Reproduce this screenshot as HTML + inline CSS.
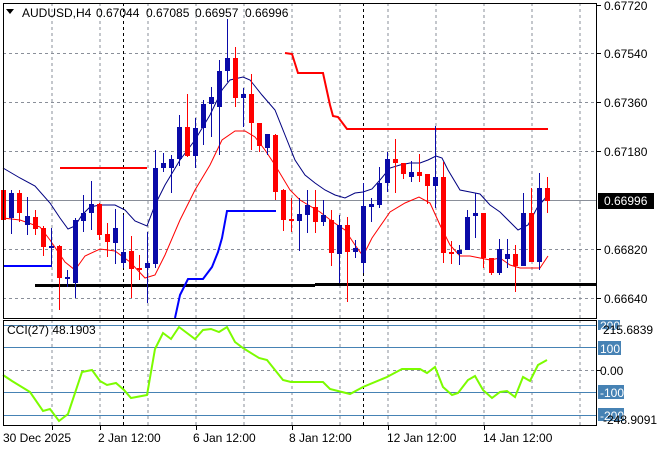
<!DOCTYPE html>
<html><head><meta charset="utf-8"><style>
html,body{margin:0;padding:0;background:#fff;width:660px;height:450px;overflow:hidden}
svg{display:block}
text{font-family:"Liberation Sans",sans-serif;font-size:12px;fill:#000}
</style></head><body>
<svg width="660" height="450" viewBox="0 0 660 450" xmlns="http://www.w3.org/2000/svg">
<rect width="660" height="450" fill="#fff"/>
<g stroke="#8a8f99" stroke-width="1" stroke-dasharray="3,3" shape-rendering="crispEdges">
<path d="M52 3V318M100 3V318M148 3V318M196 3V318M244 3V318M292 3V318M340 3V318M388 3V318M436 3V318M484 3V318M532 3V318M580 3V318"/>
<path d="M3 53.5H597M3 102.5H597M3 151.5H597M3 249.5H597M3 298.5H597"/>
<path d="M52 320V425M100 320V425M148 320V425M196 320V425M244 320V425M292 320V425M340 320V425M388 320V425M436 320V425M484 320V425M532 320V425M580 320V425"/>
<path d="M3 370.5H597"/>
</g>
<g stroke="#000" stroke-width="1" stroke-dasharray="3,3" shape-rendering="crispEdges">
<path d="M123.5 3V318M123.5 320V425M363.5 3V318M363.5 320V425"/>
</g>
<line x1="3" y1="200.5" x2="597" y2="200.5" stroke="#8a8f99" shape-rendering="crispEdges"/>
<g stroke="#4682b4" stroke-width="1" shape-rendering="crispEdges">
<path d="M3 325.5H597M3 347.5H597M3 392.5H597M3 415.5H597"/>
</g>
<path d="M35 285.5H315M315 284.5H597" stroke="#000" stroke-width="3"/>
<polyline fill="none" stroke="#000080" stroke-width="1" points="3,168 20,178 35,186 50,203 60,218 68,229 75,226 82,215 90,207 100,205 115,205 125,210 135,221 147,226 155,205 165,185 180,160 195,140 210,115 222,90 230,80 243,77 250,80 262,95 275,110 285,135 295,160 305,175 315,183 325,190 335,195 345,198 355,193 363,192 372,189 380,180 390,168 400,165 410,163 420,163 428,160 436,156 442,158 448,170 460,190 470,192 480,194 490,205 500,212 510,222 518,230 528,225 537,208 547,196"/>
<polyline fill="none" stroke="#ff0000" stroke-width="1" points="3,218 20,220 40,227 50,240 65,262 75,270 85,256 100,249 115,251 130,262 145,278 155,275 165,255 180,220 195,190 210,165 222,140 235,131 245,131 255,137 265,150 275,165 290,190 300,200 320,212 333,222 345,230 355,245 363,256 372,238 390,212 405,203 419,197 430,203 440,225 450,245 460,256 470,256 480,258 490,260 500,258 510,265 520,268 540,268 548,256"/>
<polyline fill="none" stroke="#ff0000" stroke-width="2" points="60,168 147,168"/>
<polyline fill="none" stroke="#ff0000" stroke-width="2" points="285,53 292,54 298,73 323,73 330,105 333,116 338,117 347,129 548,129"/>
<polyline fill="none" stroke="#0000ff" stroke-width="2" points="3,266 51,266"/>
<polyline fill="none" stroke="#0000ff" stroke-width="2" points="175,318 180,295 185,285 188,279 203,279 212,267 218,252 222,238 227,211 276,211"/>
<g id="c" shape-rendering="crispEdges"></g>
<polyline fill="none" stroke="#7cfc00" stroke-width="2" points="3,375 12,381 30,392 43,411 50,409 59,421 68,414 82,372 92,370 100,381 107,385 116,383 124,390 131,398 147,395 155,349 163,333 171,339 179,327 195,339 203,330 211,329 219,332 227,327 235,342 243,348 259,358 267,360 283,380 291,382 307,382 323,382 330,389 350,394 363,387 387,377 402,369 420,369 427,373 435,367 443,387 452,395 458,393 468,380 475,376 483,390 492,398 500,392 507,391 515,397 523,377 530,381 538,365 547,360"/>
<g fill="none" stroke="#000" shape-rendering="crispEdges">
<rect x="3.5" y="3.5" width="593" height="315"/>
<rect x="3.5" y="320.5" width="593" height="105"/>
</g>
<g stroke="#000" shape-rendering="crispEdges">
<path d="M597 5.5H601M597 53.5H601M597 102.5H601M597 151.5H601M597 249.5H601M597 298.5H601M597 370.5H601"/>
<path d="M52.5 426V430M100.5 426V430M196.5 426V430M292.5 426V430M388.5 426V430M484.5 426V430"/>
</g>
<text x="604" y="10">0.67720</text>
<text x="604" y="58">0.67540</text>
<text x="604" y="107">0.67360</text>
<text x="604" y="156">0.67180</text>
<rect x="598" y="193" width="56" height="16" fill="#000"/>
<text x="604" y="205" style="fill:#fff">0.66996</text>
<text x="604" y="254">0.66820</text>
<text x="604" y="303">0.66640</text>
<rect x="598" y="320" width="22" height="10" fill="#4682b4"/>
<text x="600" y="330" style="fill:#fff">200</text>
<text x="603" y="334">215.6839</text>
<rect x="598" y="341" width="23" height="14" fill="#4682b4"/>
<text x="600" y="353" style="fill:#fff">100</text>
<text x="600" y="375">0.00</text>
<rect x="598" y="385" width="26" height="14" fill="#4682b4"/>
<text x="600" y="397" style="fill:#fff">-100</text>
<rect x="598" y="408" width="26" height="13" fill="#4682b4"/>
<text x="600" y="420" style="fill:#fff">-200</text>
<text x="603" y="424">-248.9091</text>
<text x="3" y="442">30 Dec 2025</text>
<text x="98" y="442">2 Jan 12:00</text>
<text x="193" y="442">6 Jan 12:00</text>
<text x="289" y="442">8 Jan 12:00</text>
<text x="387" y="442">12 Jan 12:00</text>
<text x="483" y="442">14 Jan 12:00</text>
<path d="M6 9H14L10 14Z" fill="#000"/>
<text x="22" y="17">AUDUSD,H4</text>
<text x="96" y="17">0.67044</text>
<text x="146" y="17">0.67085</text>
<text x="195" y="17">0.66957</text>
<text x="245" y="17">0.66996</text>
<text x="7" y="334">CCI(27) 48.1903</text>
</svg>
<script>
var d=[[3,'r',190,220,168,222],[11,'b',193,218,190,234],[19,'r',193,213,190,222],[27,'b',216,225,197,235],[35,'r',217,229,210,235],[43,'r',228,247,226,256],[51,'b',246,248,228,267],[59,'r',246,278,245,310],[67,'b',277,279,270,287],[75,'b',220,283,218,298],[83,'b',213,221,195,232],[91,'b',204,213,181,230],[99,'r',204,235,203,240],[107,'r',234,242,223,257],[115,'b',228,243,209,264],[123,'b',252,263,215,268],[131,'r',251,269,236,298],[139,'r',268,270,255,280],[147,'b',263,268,232,303],[155,'b',168,264,150,268],[163,'b',163,168,153,172],[171,'b',159,168,155,193],[179,'b',127,159,115,166],[187,'r',127,156,94,157],[195,'b',128,156,118,168],[203,'b',104,128,100,145],[211,'b',97,104,87,137],[219,'b',71,107,60,155],[227,'b',58,71,19,82],[235,'r',58,98,47,107],[243,'b',94,98,88,127],[251,'r',94,123,74,150],[259,'r',123,146,123,152],[267,'b',134,148,134,155],[275,'r',135,192,134,200],[283,'r',190,220,189,231],[291,'r',219,221,198,232],[299,'b',214,221,198,251],[307,'b',205,215,190,233],[315,'r',207,222,190,233],[323,'b',215,222,200,226],[331,'r',220,253,210,266],[339,'b',225,254,215,283],[347,'r',225,252,217,302],[355,'b',248,252,240,258],[363,'b',206,263,183,273],[371,'b',204,207,198,222],[379,'b',183,205,167,208],[387,'b',159,183,152,192],[395,'r',159,163,139,193],[403,'r',163,174,163,179],[411,'b',172,177,161,182],[419,'r',172,176,154,182],[427,'r',174,186,174,204],[435,'b',177,186,126,208],[443,'r',177,253,162,263],[451,'r',252,254,241,264],[459,'b',250,254,245,265],[467,'b',217,250,210,250],[475,'b',213,216,193,238],[483,'r',213,258,213,268],[491,'r',258,273,258,275],[499,'b',249,273,239,275],[507,'b',254,259,239,268],[515,'r',254,266,245,292],[523,'b',213,266,193,266],[531,'r',213,262,188,262],[539,'b',188,262,173,270],[547,'r',188,201,177,213]];
var g=document.getElementById('c'),s='';
d.forEach(function(a){var col=a[1]=='b'?'#0a0aa8':'#ff0000';
s+='<rect x="'+a[0]+'" y="'+a[4]+'" width="1" height="'+(a[5]-a[4])+'" fill="'+col+'"/>';
s+='<rect x="'+(a[0]-2)+'" y="'+a[2]+'" width="5" height="'+Math.max(2,a[3]-a[2])+'" fill="'+col+'"/>';});
g.innerHTML=s;
</script>
</body></html>
